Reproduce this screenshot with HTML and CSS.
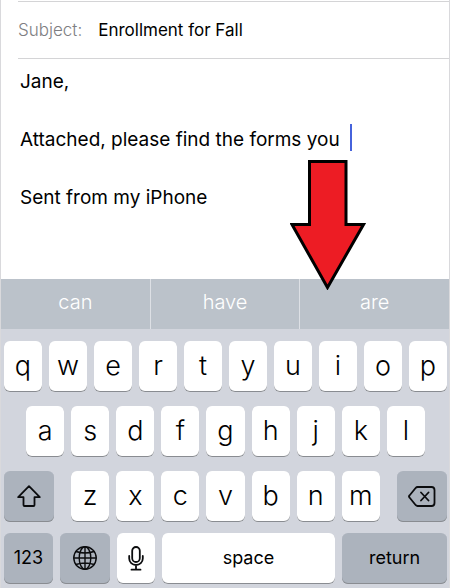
FILE: index.html
```html
<!DOCTYPE html>
<html lang="en">
<head>
<meta charset="utf-8">
<meta name="viewport" content="width=device-width, initial-scale=1">
<title>Enrollment for Fall</title>
<link rel="stylesheet" href="styles.css">
</head>
<body>
<div class="phone">
  <main class="mail">
    <div class="subject">
      <label class="subject-label" for="subject">Subject:</label>
      <input class="subject-input" id="subject" type="text" value="Enrollment for Fall">
    </div>
    <div class="message">
      <textarea class="message-text" aria-label="Message" spellcheck="false">Jane,

Attached, please find the forms you

Sent from my iPhone</textarea>
      <span class="caret"></span>
    </div>
    <svg class="arrow" viewBox="0 0 76 130" aria-hidden="true">
      <path d="M19.5 1.5H56V64.5H73.5L37.5 127.5L2 64.5H19.5Z" fill="#ed1c24" stroke="#000" stroke-width="3"/>
    </svg>
  </main>
  <section class="keyboard" aria-label="Keyboard">
    <div class="suggestions">
      <button class="suggestion">can</button>
      <button class="suggestion">have</button>
      <button class="suggestion">are</button>
    </div>
    <div class="keys">
      <div class="row">
        <button class="key">q</button><button class="key">w</button><button class="key">e</button><button class="key">r</button><button class="key">t</button><button class="key">y</button><button class="key">u</button><button class="key">i</button><button class="key">o</button><button class="key">p</button>
      </div>
      <div class="row row-inset">
        <button class="key">a</button><button class="key">s</button><button class="key">d</button><button class="key">f</button><button class="key">g</button><button class="key">h</button><button class="key">j</button><button class="key">k</button><button class="key">l</button>
      </div>
      <div class="row">
        <button class="key dark shift" aria-label="Shift">
          <svg class="icon" viewBox="0 0 28 28" aria-hidden="true"><path d="M14 4.2L24.8 15.2H19.5V23Q19.5 24 18.5 24H9.5Q8.5 24 8.5 23V15.2H3.2Z"/></svg>
        </button>
        <button class="key">z</button><button class="key">x</button><button class="key">c</button><button class="key">v</button><button class="key">b</button><button class="key">n</button><button class="key">m</button>
        <button class="key dark delete" aria-label="Delete">
          <svg class="icon" viewBox="0 0 28 28" aria-hidden="true"><path d="M9.5 5H23.5Q26.5 5 26.5 8V21Q26.5 24 23.5 24H9.5Q8.5 24 7.8 23.2L1.5 15.5Q0.5 14.5 1.5 13.5L7.8 5.8Q8.5 5 9.5 5ZM13 10.5L20.5 18.5M20.5 10.5L13 18.5"/></svg>
        </button>
      </div>
      <div class="row row-last">
        <button class="key dark numbers">123</button>
        <button class="key dark globe" aria-label="Next keyboard">
          <svg class="icon" viewBox="0 0 28 28" aria-hidden="true"><g stroke-width="1.4"><circle cx="14" cy="14" r="11.2"/><ellipse cx="14" cy="14" rx="5.8" ry="11.2"/><path d="M14 2.8V25.2M2.8 14H25.2M5 7.5Q14 10.5 23 7.5M5 20.5Q14 17.5 23 20.5"/></g></svg>
        </button>
        <button class="key" aria-label="Dictate">
          <svg class="icon" viewBox="0 0 28 28" aria-hidden="true"><rect x="10.2" y="3" width="7.6" height="15" rx="3.8"/><path d="M7.2 12V14.5A6.8 6.5 0 0 0 20.8 14.5V12M14 21.5V25.5M9.5 25.7H18.5"/></svg>
        </button>
        <button class="key space">space</button>
        <button class="key dark return">return</button>
      </div>
    </div>
  </section>
</div>
</body>
</html>
```
FILE: styles.css
```css
* {
  box-sizing: border-box;
}

body {
  margin: 0;
  background: #fff;
  font-family: Inter, "Liberation Sans", sans-serif;
}

button,
input,
textarea {
  margin: 0;
  padding: 0;
  border: 0;
  background: none;
  color: #000;
  font-family: inherit;
  outline: none;
}

.phone {
  display: flex;
  flex-direction: column;
  min-height: 100vh;
  border: solid #d9d9dc;
  border-width: 0 1px;
}

.mail {
  position: relative;
  display: flex;
  flex-direction: column;
  flex: 1;
  padding-top: 1px;
}

.subject {
  display: flex;
  align-items: center;
  gap: 16px;
  height: 58px;
  margin-left: 17px;
  border: solid #d4d4d6;
  border-width: 1px 0;
  font-size: 17px;
}

.subject-label {
  color: #7e7e82;
  font-weight: 300;
}

.subject-input {
  flex: 1;
  min-width: 0;
  font-size: 17px;
}

.message {
  position: relative;
  display: flex;
  flex: 1;
  padding: 8px 19px 0;
}

.message-text {
  flex: 1;
  min-width: 0;
  resize: none;
  overflow: hidden;
  font-size: 19px;
  line-height: 29px;
}

.caret {
  position: absolute;
  top: 65px;
  left: 349px;
  width: 2px;
  height: 27px;
  background: #4663dc;
}

.arrow {
  position: absolute;
  z-index: 1;
  top: 160px;
  left: 289px;
  width: 76px;
  height: 130px;
}

.keyboard {
  background: #d2d5dd;
}

.suggestions {
  display: flex;
  height: 50px;
  background: #bbc2ca;
}

.suggestion {
  flex: 1;
  padding-bottom: 4px;
  color: #fff;
  font-size: 20px;
  font-weight: 300;
}

.suggestion + .suggestion {
  border-left: 1px solid #dde0e5;
}

.keys {
  display: flex;
  flex-direction: column;
  gap: 14px;
  padding: 12px 2px 4px 3px;
}

.row {
  display: flex;
  gap: 7px;
}

.row-inset {
  padding: 0 22px;
}

.row-last {
  margin-top: -3px;
}

.key {
  display: flex;
  flex: 38 1 0;
  align-items: center;
  justify-content: center;
  min-width: 0;
  height: 51px;
  padding-bottom: 2px;
  border-radius: 6px;
  background: #fff;
  box-shadow: inset 0 -1px #898c91;
  font-size: 27px;
  font-weight: 300;
}

.dark {
  background: #acb3bd;
}

.shift,
.delete {
  flex-grow: 50;
}

.shift {
  margin-right: 10px;
}

.delete {
  margin-left: 10px;
}

.numbers,
.space,
.return {
  font-size: 18px;
  font-weight: 400;
}

.numbers {
  flex-grow: 49;
}

.globe {
  flex-grow: 50;
}

.space {
  flex-grow: 174;
}

.return {
  flex-grow: 105;
}

.icon {
  width: 28px;
  height: 28px;
  fill: none;
  stroke: #0b0c0e;
  stroke-width: 1.8;
  stroke-linecap: round;
  stroke-linejoin: round;
}
```
